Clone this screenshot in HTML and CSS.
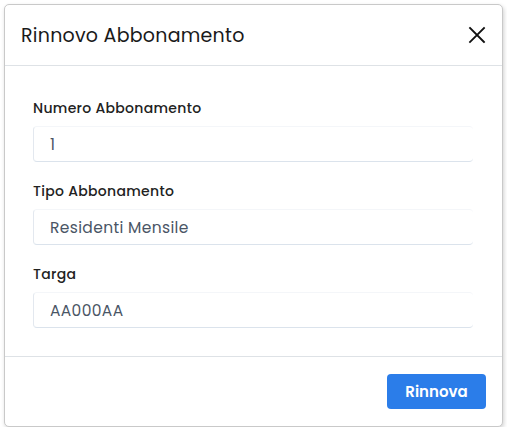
FILE: index.html
```html
<!DOCTYPE html>
<html lang="it">
<head>
<meta charset="utf-8">
<title>Rinnovo Abbonamento</title>
<link rel="stylesheet" href="styles.css">
</head>
<body>
<div class="modal">
  <div class="modal-header">
    <h1 class="modal-title">Rinnovo Abbonamento</h1>
    <button class="close" aria-label="Chiudi">
      <svg width="18" height="18" viewBox="0 0 18 18"><path d="M2 2L16 16M16 2L2 16" stroke="#111" stroke-width="1.8" fill="none" stroke-linecap="square"/></svg>
    </button>
  </div>
  <div class="modal-body">
    <div class="field">
      <label class="label">Numero Abbonamento</label>
      <div class="input">1</div>
    </div>
    <div class="field">
      <label class="label">Tipo Abbonamento</label>
      <div class="input">Residenti Mensile</div>
    </div>
    <div class="field">
      <label class="label">Targa</label>
      <div class="input">AA000AA</div>
    </div>
  </div>
  <div class="modal-footer">
    <button class="btn">Rinnova</button>
  </div>
</div>
</body>
</html>
```
FILE: styles.css
```css
html, body {
  margin: 0;
  padding: 0;
  background: #fff;
}
body {
  font-family: "Poppins", "Inter", "Noto Sans", sans-serif;
  padding: 4px 0 0 4px;
}
.modal {
  width: 497px;
  height: 421px;
  border: 1px solid #c9c9c9;
  border-radius: 5px;
  box-shadow: 1px 2px 4px rgba(0,0,0,0.18);
  display: flex;
  flex-direction: column;
  background: #fff;
}
.modal-header {
  height: 60px;
  border-bottom: 1px solid #dee2e6;
  display: flex;
  align-items: center;
  justify-content: space-between;
  padding: 0 16px 0 16px;
}
.modal-title {
  margin: 0;
  font-size: 19px;
  font-weight: 400;
  color: #1a1a1a;
  letter-spacing: 0.25px;
}
.close {
  background: none;
  border: 0;
  padding: 0;
  width: 18px;
  height: 18px;
  display: flex;
}
.modal-body {
  flex: 1;
  padding: 32px 29px 0 28px;
  display: flex;
  flex-direction: column;
  gap: 19px;
}
.field {
  display: flex;
  flex-direction: column;
  gap: 7px;
}
.label {
  font-size: 14px;
  line-height: 21px;
  color: #222;
  font-weight: 500;
  letter-spacing: 0.3px;
}
.input {
  width: 423px;
  height: 34px;
  border-left: 1px solid #e3e8ef;
  border-bottom: 1px solid #dbe3ec;
  border-top: 1px solid #f4f6f9;
  border-radius: 4px;
  padding-left: 16px;
  display: flex;
  align-items: center;
  font-size: 15.5px;
  letter-spacing: 0.35px;
  color: #4a5565;
}
.modal-footer {
  height: 69px;
  border-top: 1px solid #dee2e6;
  display: flex;
  align-items: center;
  justify-content: flex-end;
  padding: 0 16px;
}
.btn {
  width: 99px;
  height: 35px;
  background: #2b7de9;
  color: #fff;
  border: 0;
  border-radius: 4px;
  font-family: inherit;
  font-size: 15px;
  font-weight: 600;
}
```
